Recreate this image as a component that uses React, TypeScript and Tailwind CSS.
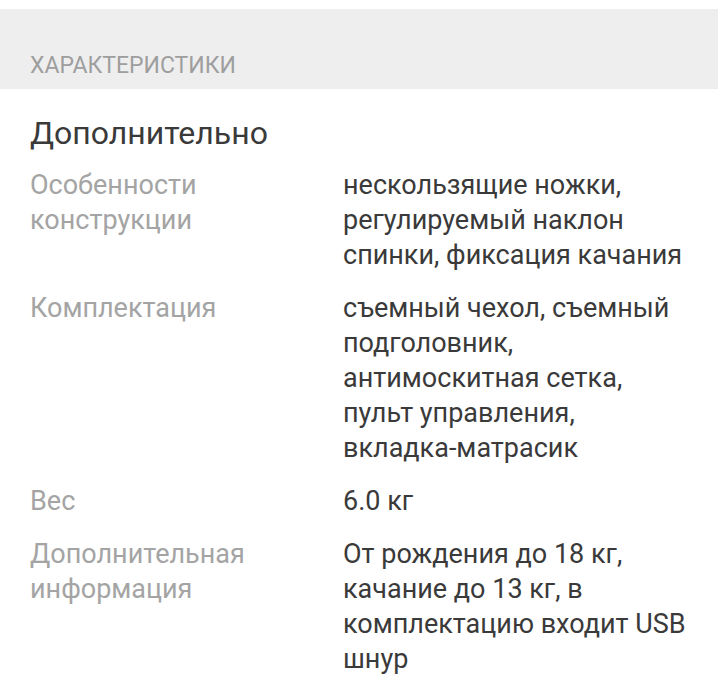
const rows: { label: string[]; value: string[] }[] = [
  {
    label: ['Особенности', 'конструкции'],
    value: ['нескользящие ножки,', 'регулируемый наклон', 'спинки, фиксация качания'],
  },
  {
    label: ['Комплектация'],
    value: [
      'съемный чехол, съемный',
      'подголовник,',
      'антимоскитная сетка,',
      'пульт управления,',
      'вкладка-матрасик',
    ],
  },
  { label: ['Вес'], value: ['6.0 кг'] },
  {
    label: ['Дополнительная', 'информация'],
    value: ['От рождения до 18 кг,', 'качание до 13 кг, в', 'комплектацию входит USB', 'шнур'],
  },
];

export default function App() {
  return (
    <div className="w-[718px] h-[699px] bg-white overflow-hidden pt-[9px]" style={{ fontFamily: 'Roboto, "Noto Sans", sans-serif' }}>
      <div className="h-[80px] bg-[#eeeeee] flex items-end pb-[10px] px-[30px]">
        <span className="text-[23px] leading-[27px] text-[#9e9e9e]">ХАРАКТЕРИСТИКИ</span>
      </div>
      <div className="px-[30px] pt-[25px]">
        <h2 className="text-[32px] text-[#3a3a3a] leading-[38px]">Дополнительно</h2>
        <div className="mt-[16px] flex flex-col gap-[18px]">
          {rows.map((row) => (
            <div key={row.label[0]} className="flex text-[27px] leading-[35px]">
              <div className="w-[313px] text-[#a4a4a4]">
                {row.label.map((l) => (
                  <div key={l}>{l}</div>
                ))}
              </div>
              <div className="text-[#3a3a3a]">
                {row.value.map((v) => (
                  <div key={v}>{v}</div>
                ))}
              </div>
            </div>
          ))}
        </div>
      </div>
    </div>
  );
}
